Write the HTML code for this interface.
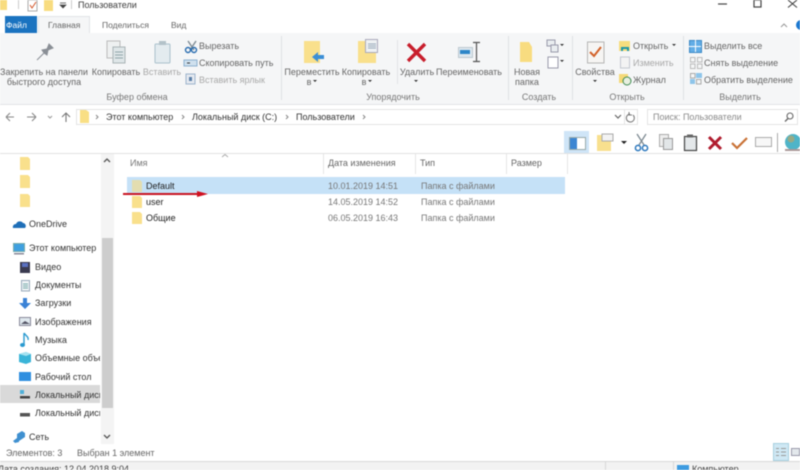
<!DOCTYPE html>
<html><head><meta charset="utf-8"><style>
html,body{margin:0;padding:0;background:#fff}
#r{position:relative;width:800px;height:470px;overflow:hidden;background:#fff;font-family:"Liberation Sans","Noto Sans CJK SC",sans-serif;font-size:9px;color:#3c3c3c;filter:blur(.45px)}
#r div,#r svg{position:absolute}
.t{white-space:nowrap;line-height:12px}
.c{text-align:center;transform:translateX(-50%)}
.g{color:#a8a8a8}
.gr{color:#666}
.s{background:#dfe1e4;width:1px;top:36px;height:64px}
</style></head><body><div id="r">
<!-- title bar -->
<svg style="left:0;top:0" width="800" height="34">
<rect x="0" y="0" width="7" height="10" fill="#f8dc80"/>
<rect x="18" y="0" width="1" height="9" fill="#ccc"/>
<rect x="28" y="0" width="9" height="11" fill="#fff" stroke="#aaa"/><path d="M30 5l2 3 4-6" stroke="#d4562a" fill="none"/>
<rect x="44" y="0" width="9" height="11" fill="#f8dc80"/>
<path d="M60 3h6M60 5h6l-3 3z" stroke="#444" fill="#444" stroke-width=".7"/>
<rect x="71" y="0" width="1" height="9" fill="#ccc"/>
<path d="M718 4h9" stroke="#444" stroke-width="1.2"/>
<rect x="754" y="0" width="7" height="7" fill="none" stroke="#444" stroke-width="1.2"/>
<path d="M788 0l9 7.500M797 0l-9 7.500" stroke="#444" stroke-width="1.1"/>
<path d="M781 27l3-3 3 3" stroke="#999" fill="none"/>
<circle cx="801" cy="25" r="5" fill="#1c78d0"/>
</svg>
<div class="t" style="left:78px;top:-1px">Пользователи</div>
<div style="left:5px;top:16px;width:32px;height:17px;background:#1a73c0"></div>
<div class="t" style="left:6px;top:19px;color:#fff;font-size:8.5px">Файл</div>
<div style="left:38px;top:16px;width:52px;height:18px;background:#f5f6f7;border:1px solid #e1e3e6;border-bottom:none;box-sizing:border-box"></div>
<div class="t gr" style="left:48px;top:19px;font-size:8.5px">Главная</div>
<div class="t gr" style="left:102px;top:19px;font-size:8.5px">Поделиться</div>
<div class="t gr" style="left:171px;top:19px;font-size:8.5px">Вид</div>
<!-- ribbon -->
<div style="left:0;top:33px;width:800px;height:71px;background:#f5f6f7;border-bottom:1px solid #e3e4e6"></div>
<div style="left:38px;top:33px;width:52px;height:2px;background:#f5f6f7"></div>
<div class="s" style="left:281px"></div><div class="s" style="left:508px"></div><div class="s" style="left:572px"></div><div class="s" style="left:683px"></div>
<div style="left:397px;top:40px;width:1px;height:44px;background:#e3e4e6"></div>
<svg style="left:0;top:34px" width="800" height="60" viewBox="0 34 800 60">
<!-- pin -->
<path d="M37 60l7-7-2-3 5-1 2-5 4 4-5 2-1 5-3-2-7 7z" fill="#8a8f96" stroke="#8a8f96"/>
<!-- copy -->
<rect x="107" y="41" width="13" height="17" fill="#eef0f1" stroke="#bbb"/><rect x="113" y="47" width="12" height="16" fill="#dfe6e8" stroke="#a9b3b6"/><path d="M115 52h8M115 55h8M115 58h8" stroke="#8fa3a8"/>
<!-- paste -->
<rect x="155" y="44" width="15" height="19" rx="1" fill="#e3ebef" stroke="#a9c0cc"/><rect x="159" y="41" width="7" height="4" fill="#b3c2c9"/>
<!-- cut -->
<path d="M188 41l6 9M196 41l-6 9" stroke="#7f8c95" stroke-width="1.4"/><circle cx="188" cy="50" r="2.500" fill="none" stroke="#2a6db0" stroke-width="1.4"/><circle cx="194" cy="50" r="2.500" fill="none" stroke="#2a6db0" stroke-width="1.4"/>
<rect x="184" y="60" width="13" height="6" fill="#cfe0ee" stroke="#8cb0d0"/><path d="M187 63h3" stroke="#333"/>
<rect x="186" y="74" width="9" height="10" fill="#e5e9f0" stroke="#9db4cc"/><rect x="189" y="77" width="3" height="4" fill="#5a7fa8"/>
<!-- move -->
<rect x="304" y="41" width="16" height="22" fill="#f9e08c"/><path d="M312 57l6-5v3h6v4h-6v3z" fill="#3c8fd6"/>
<!-- copy to -->
<rect x="358" y="41" width="18" height="22" fill="#f9e08c"/><rect x="365.500" y="39.500" width="12" height="13" fill="#eef1f3" stroke="#aab"/><path d="M368 44h8M368 46h8M368 48h8" stroke="#9ab"/>
<!-- delete -->
<path d="M408 44l17 17M425 44l-17 17" stroke="#c81e2c" stroke-width="3.4"/>
<!-- rename -->
<rect x="458.500" y="47.500" width="14" height="10" fill="#dde7ee" stroke="#bcc8d0"/><rect x="460" y="50" width="10" height="4" fill="#2d86c8"/>
<path d="M473 42.500h7M476.500 42.500v19M473 61.500h7" stroke="#555" stroke-width="1.2" fill="none"/>
<!-- new folder -->
<path d="M520 42h9l3 5v15h-12z" fill="#f8dc80"/>
<rect x="547" y="40" width="8" height="6" fill="#e9edf0" stroke="#99a"/><rect x="551" y="45" width="7" height="7" fill="#e9edf0" stroke="#99a"/>
<path d="M560 44h4l-2 2z" fill="#333"/>
<rect x="548" y="57" width="10" height="11" fill="#fff" stroke="#99a"/><path d="M560 60h4l-2 2z" fill="#333"/>
<!-- props -->
<rect x="587.500" y="42" width="16.500" height="21" fill="#f6f5f3" stroke="#b5b5b5"/><path d="M590 52l4 4 7-9" stroke="#d2622a" stroke-width="2" fill="none"/>
<!-- open -->
<rect x="619" y="41" width="11" height="10" fill="#f7dd7e"/><path d="M621 51v-4h8v4h-2v-2h-4v2z" fill="#1f96a8"/>
<rect x="620.500" y="57" width="9" height="11" fill="#f3f3f3" stroke="#c4c8d0"/>
<rect x="619" y="74" width="9" height="9" fill="#f5d978"/><circle cx="627" cy="81" r="4" fill="#e8f0e0" stroke="#3f8a50"/>
<path d="M672 44h4l-2 2z" fill="#333"/>
<!-- select -->
<rect x="689.500" y="40.500" width="12" height="12" fill="#62ade6" stroke="#3b88c5"/><path d="M695.500 40v12M689 46.500h12" stroke="#fff"/>
<rect x="690.500" y="57.500" width="4.500" height="4.500" fill="none" stroke="#bbb"/><rect x="697.500" y="57.500" width="4.500" height="4.500" fill="none" stroke="#bbb"/><rect x="690.500" y="64" width="4.500" height="4.500" fill="none" stroke="#bbb"/><rect x="697.500" y="64" width="4.500" height="4.500" fill="none" stroke="#bbb"/>
<rect x="690" y="79" width="5" height="5" fill="#8ec5ea"/><rect x="696" y="73" width="6" height="5" fill="#8ec5ea"/><rect x="690.500" y="73.500" width="4.500" height="4.500" fill="none" stroke="#aaa"/><rect x="696.500" y="79.500" width="4.500" height="4.500" fill="none" stroke="#aaa"/>
<path d="M313 80h4l-2 2zM368 80h4l-2 2zM414 80h4l-2 2zM593 80h4l-2 2z" fill="#333"/>
</svg>
<div class="t c gr" style="left:44px;top:66px">Закрепить на панели</div>
<div class="t c gr" style="left:44px;top:76px">быстрого доступа</div>
<div class="t c gr" style="left:116px;top:66px">Копировать</div>
<div class="t c g" style="left:162px;top:66px">Вставить</div>
<div class="t gr" style="left:199px;top:40px">Вырезать</div>
<div class="t gr" style="left:199px;top:57px">Скопировать путь</div>
<div class="t g" style="left:199px;top:74px">Вставить ярлык</div>
<div class="t c" style="left:137px;top:91px;color:#777">Буфер обмена</div>
<div class="t c gr" style="left:312px;top:66px">Переместить</div>
<div class="t c gr" style="left:309px;top:76px">в</div>
<div class="t c gr" style="left:366px;top:66px">Копировать</div>
<div class="t c gr" style="left:364px;top:76px">в</div>
<div class="t c gr" style="left:417px;top:66px">Удалить</div>
<div class="t c gr" style="left:469px;top:66px">Переименовать</div>
<div class="t c" style="left:393px;top:91px;color:#777">Упорядочить</div>
<div class="t c gr" style="left:527px;top:66px">Новая</div>
<div class="t c gr" style="left:527px;top:76px">папка</div>
<div class="t c" style="left:539px;top:91px;color:#777">Создать</div>
<div class="t c gr" style="left:595px;top:66px">Свойства</div>
<div class="t gr" style="left:633px;top:40px">Открыть</div>
<div class="t g" style="left:633px;top:57px">Изменить</div>
<div class="t gr" style="left:633px;top:74px">Журнал</div>
<div class="t c" style="left:627px;top:91px;color:#777">Открыть</div>
<div class="t gr" style="left:704px;top:40px">Выделить все</div>
<div class="t gr" style="left:704px;top:57px">Снять выделение</div>
<div class="t gr" style="left:704px;top:74px">Обратить выделение</div>
<div class="t c" style="left:740px;top:91px;color:#777">Выделить</div>
<!-- address -->
<div style="left:76px;top:109px;width:562px;height:16px;border:1px solid #e4e4e4;box-sizing:border-box"></div>
<div style="left:624px;top:109px;width:1px;height:16px;background:#e4e4e4"></div>
<div style="left:647px;top:109px;width:151px;height:16px;border:1px solid #e4e4e4;box-sizing:border-box"></div>
<svg style="left:0;top:105px" width="800" height="25" viewBox="0 105 800 25">
<path d="M6 117h8M6 117l4-4M6 117l4 4" stroke="#888" fill="none" stroke-width="1.1"/>
<path d="M27 117h9M36 117l-4-4M36 117l-4 4" stroke="#888" fill="none" stroke-width="1.1"/>
<path d="M48 116l2 2 2-2" stroke="#999" fill="none"/>
<path d="M66 122v-9M62 117l4-4 4 4" stroke="#777" fill="none" stroke-width="1.1"/>
<path d="M80 110h6l3 2v11h-9z" fill="#f9df85"/>
<path d="M96 115l2 2-2 2M182 115l2 2-2 2M286 115l2 2-2 2M363 115l2 2-2 2" stroke="#888" fill="none"/>
<path d="M615 115l3 3 3-3" stroke="#666" fill="none" stroke-width="1.2"/>
<path d="M630 114a4 4 0 1 0 3 1M629 112v3h3" stroke="#777" fill="none"/>
<circle cx="790" cy="116" r="3" fill="none" stroke="#666" stroke-width="1.1"/><path d="M788 118.500l-3 3" stroke="#666" stroke-width="1.3"/>
</svg>
<div class="t" style="left:106px;top:111px;color:#333">Этот компьютер</div>
<div class="t" style="left:192px;top:111px;color:#333">Локальный диск (C:)</div>
<div class="t" style="left:296px;top:111px;color:#333">Пользователи</div>
<div class="t" style="left:653px;top:111px;color:#8a8a8a">Поиск: Пользователи</div>
<!-- toolbar -->
<div style="left:564px;top:131px;width:25px;height:22px;background:#cfe5f7"></div>
<svg style="left:560px;top:130px" width="240" height="26" viewBox="560 130 240 26">
<rect x="569.500" y="137.500" width="16" height="12" fill="#fff" stroke="#9aa"/><rect x="570" y="138" width="7" height="11" fill="#3d86d2"/>
<rect x="597" y="135" width="14" height="16" fill="#f8e08e"/><rect x="602" y="134" width="11" height="7" fill="#f3f3f3" stroke="#aaa"/>
<path d="M621 141h6l-3 3z" fill="#222"/>
<path d="M637 134l7 11M646 134l-7 11" stroke="#7e8a92" stroke-width="1.3"/><circle cx="638" cy="148" r="2.600" fill="none" stroke="#2d78bd" stroke-width="1.5"/><circle cx="645" cy="148" r="2.600" fill="none" stroke="#2d78bd" stroke-width="1.5"/>
<rect x="659.500" y="134.500" width="9" height="12" fill="#eee" stroke="#aaa"/><rect x="663.500" y="138.500" width="9" height="11" fill="#e2e6e8" stroke="#999"/>
<rect x="684.500" y="136.500" width="12" height="14" fill="#e4e8ea" stroke="#444" stroke-width="1.2"/><rect x="687" y="134.500" width="6" height="3" fill="#666"/>
<path d="M709 137l12 12M721 137l-12 12" stroke="#b01c2e" stroke-width="3"/>
<path d="M732 143l5 5 10-10" stroke="#c97236" stroke-width="2.200" fill="none"/>
<rect x="755.500" y="137.500" width="16" height="9" fill="#f7f7f7" stroke="#aaa"/>
<rect x="777" y="133" width="1" height="19" fill="#aaa"/>
<circle cx="793" cy="142" r="8" fill="#4fb4c8"/><path d="M785 150h16" stroke="#a99" stroke-width="2"/><circle cx="791" cy="139" r="3.500" fill="#c9a35a" opacity=".6"/>
</svg>
<!-- divider -->
<div style="left:0;top:153px;width:800px;height:1px;background:#e2e2e2"></div>
<!-- scrollbar -->
<div style="left:101px;top:154px;width:13px;height:290px;background:#f4f4f4"></div>
<div style="left:102px;top:238px;width:11px;height:170px;background:#cdcdcd"></div>
<svg style="left:100px;top:155px" width="15" height="290" viewBox="100 155 15 290">
<path d="M104 162l3-3 3 3" stroke="#555" fill="none" stroke-width="1.3"/>
<path d="M104 435l3 3 3-3" stroke="#555" fill="none" stroke-width="1.3"/>
</svg>
<!-- nav selection -->
<div style="left:0;top:385px;width:100px;height:18px;background:#d9d9d9"></div>
<svg style="left:0;top:155px" width="100" height="290" viewBox="0 155 100 290">
<path d="M20 157h8l2 2v11h-10z" fill="#f9e08c"/><path d="M20 175h8l2 2v11h-10z" fill="#f9e08c"/><path d="M20 194h8l2 2v11h-10z" fill="#f9e08c"/>
<path d="M13 228a3 3 0 0 1 3-4 4 4 0 0 1 7-1 3 3 0 0 1 2 5z" fill="#1f6fb8"/>
<rect x="13.500" y="243.500" width="11" height="8" fill="#3fa0e0" stroke="#7aa"/><rect x="14" y="253" width="10" height="1.500" fill="#889"/>
<rect x="20" y="262" width="10" height="11" fill="#3a3a50"/><rect x="22" y="263" width="6" height="4" fill="#5a70c0"/>
<rect x="21.500" y="280.500" width="8" height="10.500" fill="#f0f4f6" stroke="#9ab"/><path d="M23 284h5M23 286h5M23 288h5" stroke="#7aa"/>
<path d="M23 298h4v5h4l-6 6-6-6h4z" fill="#3a82d6"/>
<rect x="19.500" y="317.500" width="11" height="8" fill="#dfe8ee" stroke="#889"/><path d="M21 324l4-3 5 3z" fill="#556"/>
<path d="M24 333v12M24 333c2 3 5 4 4 7" stroke="#2a9ad0" stroke-width="1.400" fill="none"/><ellipse cx="22.500" cy="345" rx="2.500" ry="2" fill="#2a9ad0"/>
<path d="M19 354l7-2 5 2v8l-5 2-7-2z" fill="#3ab4d8"/><path d="M19 354l7 2 5-2-5-2z" fill="#a6e2f0"/>
<rect x="19" y="372" width="12" height="9" fill="#2f8fe0"/>
<rect x="20" y="390" width="4" height="4" fill="#50b0d8"/><rect x="20" y="396" width="10" height="2.500" fill="#444"/>
<rect x="20" y="413" width="10" height="3.500" fill="#555"/>
<path d="M13 441l4-3v-4l5-3 3 2v4l-6 4v1l-4 1z" fill="#3f90d0"/>
</svg>
<div class="t" style="left:29px;top:218px;color:#333">OneDrive</div>
<div class="t" style="left:29px;top:242px;color:#333">Этот компьютер</div>
<div class="t" style="left:35px;top:261px;color:#333">Видео</div>
<div class="t" style="left:35px;top:279px;color:#333">Документы</div>
<div class="t" style="left:35px;top:297px;color:#333">Загрузки</div>
<div class="t" style="left:35px;top:316px;color:#333">Изображения</div>
<div class="t" style="left:35px;top:334px;color:#333">Музыка</div>
<div style="left:35px;top:352px;width:65px;height:70px;overflow:hidden">
<div class="t" style="left:0;top:0;color:#333">Объемные объекты</div>
<div class="t" style="left:0;top:19px;color:#333">Рабочий стол</div>
<div class="t" style="left:0;top:37px;color:#333">Локальный диск (C:)</div>
<div class="t" style="left:0;top:55px;color:#333">Локальный диск (D:)</div>
</div>
<div class="t" style="left:29px;top:431px;color:#333">Сеть</div>
<!-- list -->
<svg style="left:217px;top:152px" width="16" height="8"><path d="M5 5l3-2.500 3 2.500" stroke="#aaa" fill="none"/></svg>
<div style="left:323px;top:154px;width:1px;height:20px;background:#e6e6e6"></div>
<div style="left:415px;top:154px;width:1px;height:20px;background:#e6e6e6"></div>
<div style="left:506px;top:154px;width:1px;height:20px;background:#e6e6e6"></div>
<div style="left:567px;top:154px;width:1px;height:20px;background:#e6e6e6"></div>
<div class="t" style="left:130px;top:157px;color:#777">Имя</div>
<div class="t" style="left:328px;top:157px;color:#666">Дата изменения</div>
<div class="t" style="left:420px;top:157px;color:#666">Тип</div>
<div class="t" style="left:511px;top:157px;color:#666">Размер</div>
<div style="left:127px;top:177px;width:438px;height:17px;background:#c5e1f7"></div>
<svg style="left:125px;top:175px" width="30" height="52" viewBox="125 175 30 52">
<path d="M132 180h8l2 2v10h-10z" fill="#e3ddb0"/>
<path d="M132 196h8l2 2v10h-10z" fill="#f9e08c"/>
<path d="M132 212h8l2 2v10h-10z" fill="#f9e08c"/>
</svg>
<div class="t" style="left:146px;top:180px;color:#222">Default</div>
<div class="t" style="left:146px;top:196px;color:#222">user</div>
<div class="t" style="left:146px;top:212px;color:#222">Общие</div>
<div class="t" style="left:328px;top:180px;color:#777">10.01.2019 14:51</div>
<div class="t" style="left:328px;top:196px;color:#777">14.05.2019 14:52</div>
<div class="t" style="left:328px;top:212px;color:#777">06.05.2019 16:43</div>
<div class="t" style="left:421px;top:180px;color:#777">Папка с файлами</div>
<div class="t" style="left:421px;top:196px;color:#777">Папка с файлами</div>
<div class="t" style="left:421px;top:212px;color:#777">Папка с файлами</div>
<!-- red arrow -->
<svg style="left:120px;top:186px" width="100" height="16" viewBox="120 186 100 16"><path d="M123 194h76" stroke="#c81422" stroke-width="2"/><path d="M197 191l11 3-11 3z" fill="#d01020"/></svg>
<!-- status -->
<div class="t" style="left:6px;top:447px;color:#666">Элементов: 3</div>
<div class="t" style="left:77px;top:447px;color:#666">Выбран 1 элемент</div>
<div style="left:773px;top:443px;width:16px;height:18px;background:#cfe8f4;border:1px solid #a8d0e0;box-sizing:border-box"></div>
<svg style="left:772px;top:443px" width="28" height="18"><path d="M4 5.500h3M9 5.500h5M4 9h3M9 9h5M4 12.500h3M9 12.500h5" stroke="#999"/><rect x="19.500" y="5.500" width="8" height="7" fill="#e3e8ec" stroke="#99a"/></svg>
<div style="left:0;top:461px;width:800px;height:9px;background:#f2f2f2;border-top:1px solid #d8d8d8;box-sizing:border-box"></div>
<div style="left:605px;top:461px;width:1px;height:9px;background:#d8d8d8"></div>
<div style="left:673px;top:461px;width:1px;height:9px;background:#d8d8d8"></div>
<div class="t" style="left:-2px;top:463px;color:#444">Дата создания: 12.04.2018 9:04</div>
<div style="left:677px;top:465px;width:12px;height:5px;background:#3d9be0"></div>
<div class="t" style="left:692px;top:463px;color:#444">Компьютер</div>
</div></body></html>
